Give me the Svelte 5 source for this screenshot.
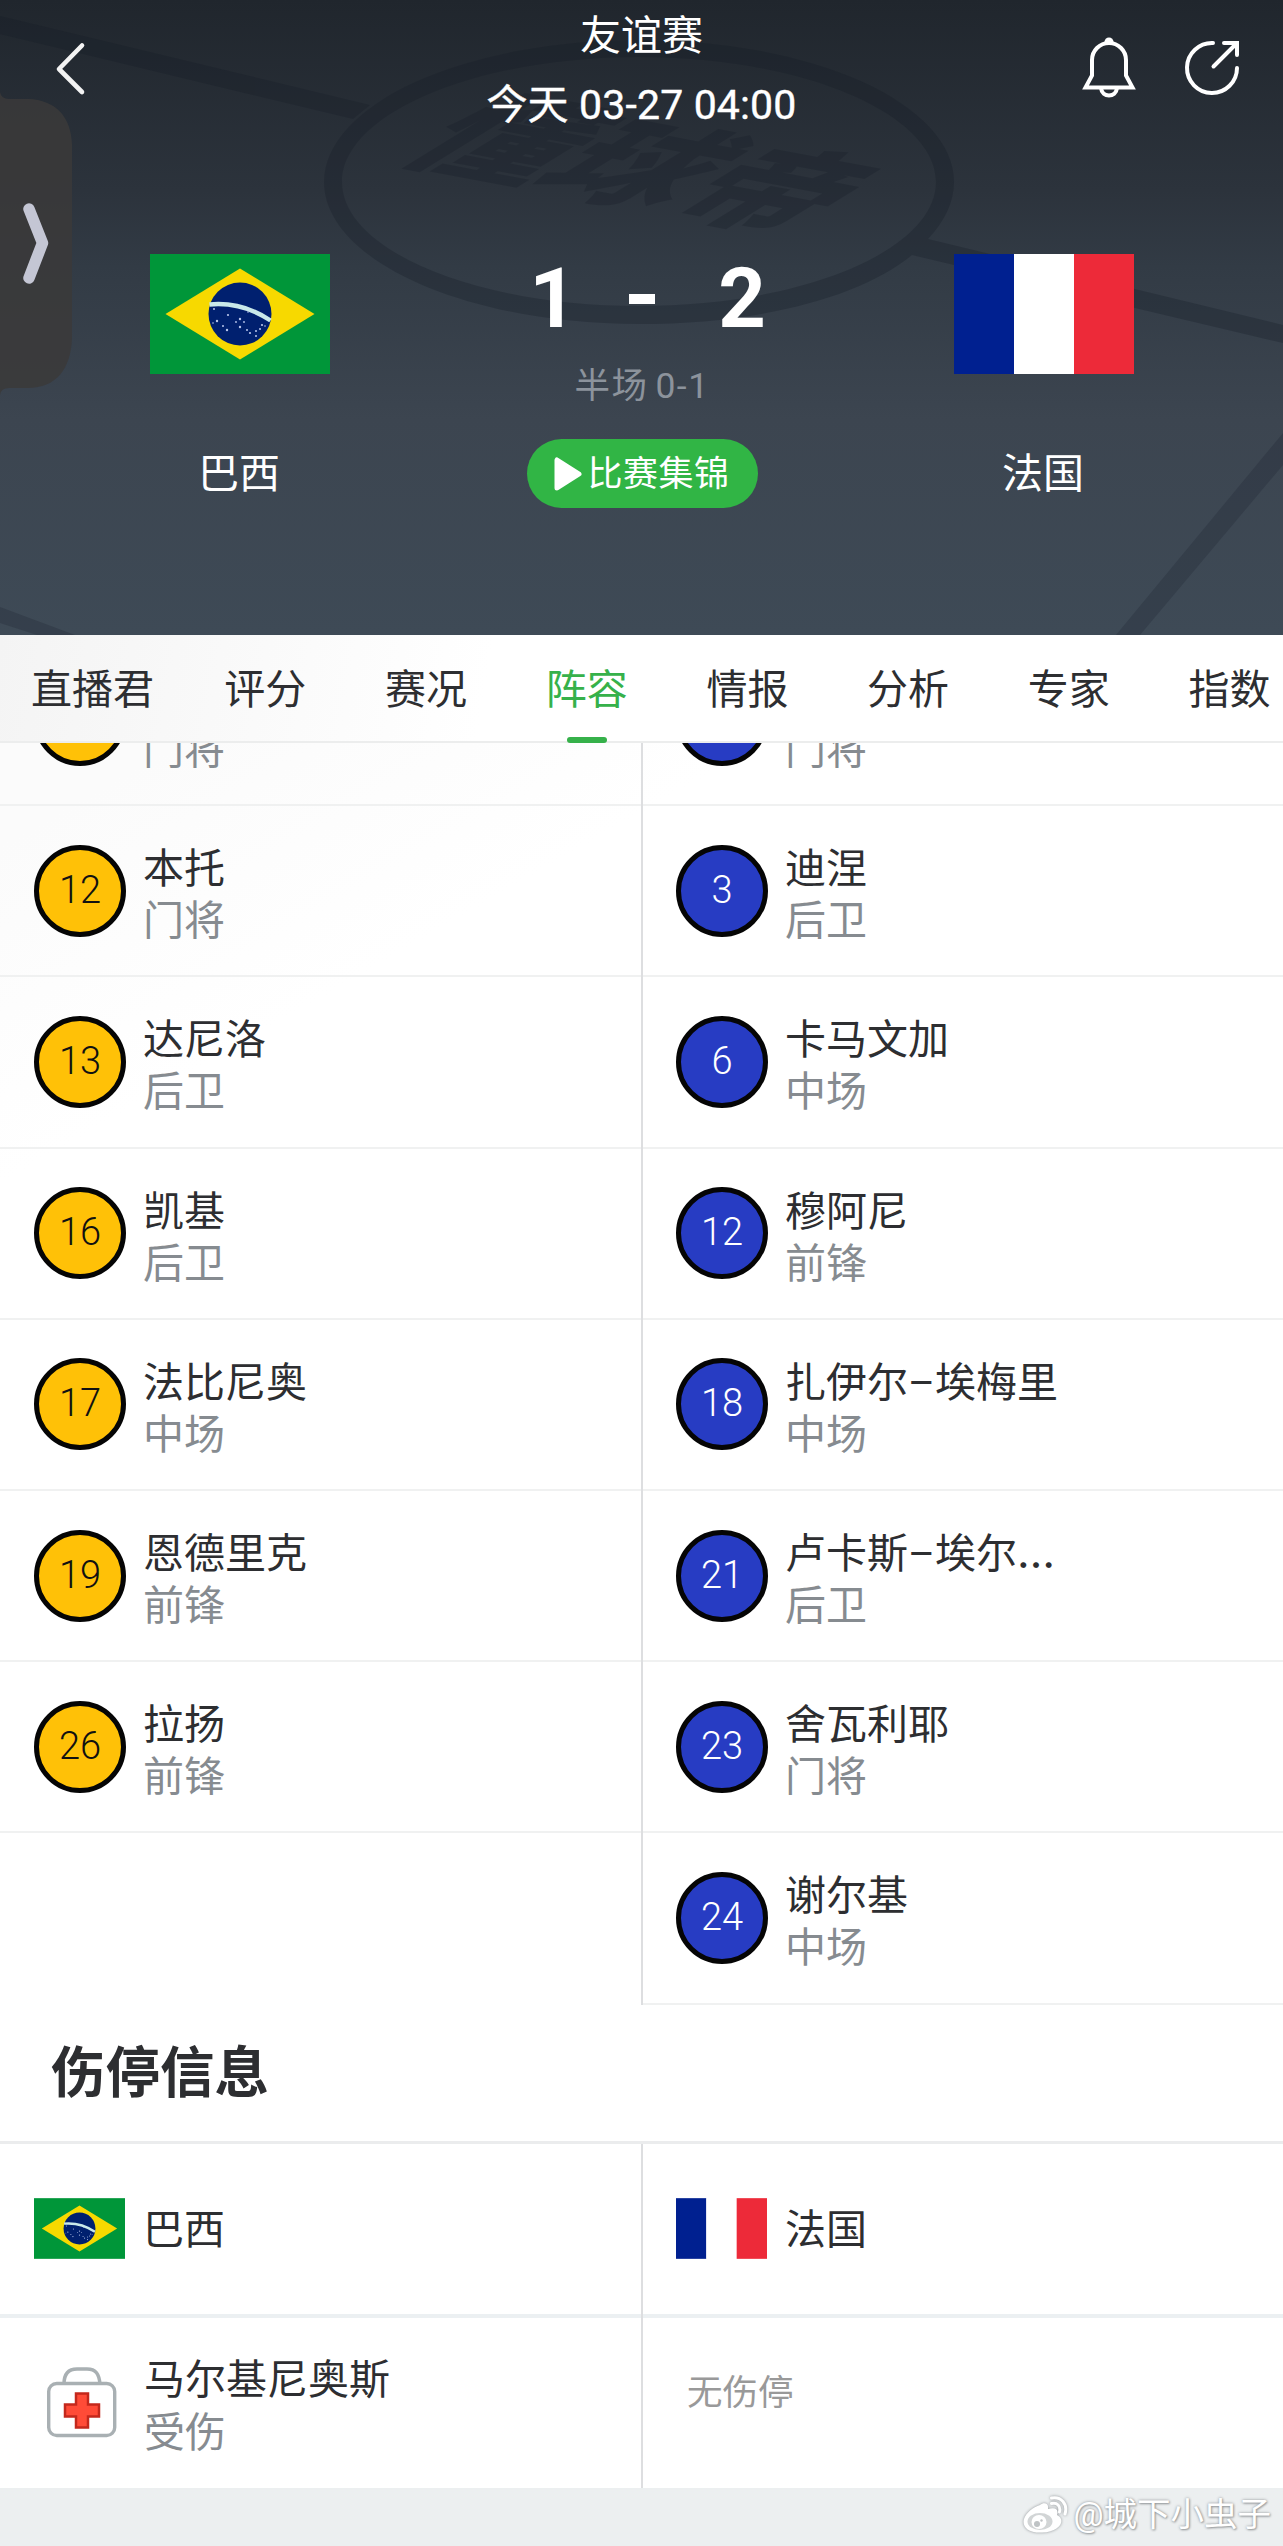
<script lang="ts">
	type Player = { num: string; name: string; role: string; cut?: boolean };

	const tabs = ['直播君', '评分', '赛况', '阵容', '情报', '分析', '专家', '指数'];
	let active = $state(3);

	// first row of each side is scrolled under the tab bar
	const home: Player[] = [
		{ num: '', name: '', role: '门将' },
		{ num: '12', name: '本托', role: '门将' },
		{ num: '13', name: '达尼洛', role: '后卫' },
		{ num: '16', name: '凯基', role: '后卫' },
		{ num: '17', name: '法比尼奥', role: '中场' },
		{ num: '19', name: '恩德里克', role: '前锋' },
		{ num: '26', name: '拉扬', role: '前锋' }
	];
	const away: Player[] = [
		{ num: '', name: '', role: '门将' },
		{ num: '3', name: '迪涅', role: '后卫' },
		{ num: '6', name: '卡马文加', role: '中场' },
		{ num: '12', name: '穆阿尼', role: '前锋' },
		{ num: '18', name: '扎伊尔–埃梅里', role: '中场' },
		{ num: '21', name: '卢卡斯–埃尔', role: '后卫', cut: true },
		{ num: '23', name: '舍瓦利耶', role: '门将' },
		{ num: '24', name: '谢尔基', role: '中场' }
	];
</script>

{#snippet brazil()}
	<svg class="flag" viewBox="0 0 180 120">
		<rect width="180" height="120" fill="#009639" />
		<path d="M15.500 60 90 14.500 164.500 60 90 105.500z" fill="#f7d900" />
		<circle cx="90" cy="60" r="31.500" fill="#00206f" />
		<path d="M59.500 50.500Q92 47.500 120.500 66.500" fill="none" stroke="#c9e9ea" stroke-width="4.500" />
		<g fill="#b9c6ec">
			<circle cx="64" cy="55" r="1" />
			<circle cx="78" cy="61" r="1.100" />
			<circle cx="67" cy="67" r="1.200" />
			<circle cx="73" cy="72" r="1" />
			<circle cx="77" cy="76" r="1.200" />
			<circle cx="63" cy="69" r=".8" />
			<circle cx="90" cy="65" r="1.200" />
			<circle cx="86" cy="68" r=".9" />
			<circle cx="94" cy="68" r=".9" />
			<circle cx="90" cy="73" r="1.200" />
			<circle cx="97" cy="76" r="1" />
			<circle cx="100" cy="79" r="1.100" />
			<circle cx="106" cy="77" r="1" />
			<circle cx="106" cy="82" r="1" />
			<circle cx="110" cy="75" r="1" />
			<circle cx="112" cy="71" r="1.100" />
			<circle cx="115" cy="72" r=".8" />
			<circle cx="98" cy="58" r=".8" />
		</g>
	</svg>
{/snippet}

{#snippet france()}
	<svg class="flag" viewBox="0 0 180 120">
		<rect width="60" height="120" fill="#002090" />
		<rect x="60" width="60" height="120" fill="#fff" />
		<rect x="120" width="60" height="120" fill="#ed2a39" />
	</svg>
{/snippet}

{#snippet player(p: Player)}
	<div class="player">
		<span class="shirt">{p.num}</span>
		<div class="who">
			<span class="name">{p.name}{#if p.cut}<i class="dots">…</i>{/if}</span>
			<span class="role">{p.role}</span>
		</div>
	</div>
{/snippet}

<div class="page">
	<header>
		<svg class="pitch" viewBox="0 0 1283 635">
			<g fill="#161c27" opacity=".29">
				<path
					d="M324 182a315 142 0 0 1 630 0q0 29-26 57L1283 325V343L912 255C860 298 757 324 639 324 465 324 324 260 324 182zM342 182C342 250 475 306 639 306S936 250 936 182 803 57 639 57 342 114 342 182z"
					fill-rule="evenodd"
				/>
				<path d="M0 16 370 105 353 119 0 34z" />
			</g>
			<g fill="#161c27" opacity=".22">
				<path d="M1283 433 1116 635H1140L1283 465z" />
				<path d="M0 607 75 635H37L0 623z" />
			</g>
			<text class="brand" transform="matrix(1.34 .25 -1.3 .8 508 87)" y="88">懂球帝</text>
		</svg>

		<div class="bar">
			<svg class="back" width="32" height="56" viewBox="0 0 32 56">
				<path d="M27 4.500 4 28 27 51" fill="none" stroke="#f3f3f3" stroke-width="4.600" stroke-linecap="round" stroke-linejoin="round" />
			</svg>
			<div class="meta">
				<span>友谊赛</span>
				<span class="date">今天 03-27 04:00</span>
			</div>
			<div class="actions">
				<svg width="54" height="62" viewBox="0 0 54 62" fill="none" stroke="#fff" stroke-width="4">
					<path d="M3.500 50.500 10 38.500V23a17 17 0 0 1 34 0V38.500L50.500 50.500z" />
					<path d="M19 51c1 10 15 10 16 0" />
					<path d="M22.500 5a4.500 4.500 0 0 1 9 0z" fill="#fff" stroke="none" />
				</svg>
				<svg width="56" height="56" viewBox="0 0 56 56" fill="none" stroke="#fff" stroke-width="4" stroke-linecap="round">
					<path d="M29 3A25 25 0 1 0 53 28" />
					<path d="M29.500 26.500 52 4M40 3H53V15" />
				</svg>
			</div>
		</div>

		<div class="match">
			<div class="team">
				{@render brazil()}
				<span>巴西</span>
			</div>
			<div class="result">
				<div class="score"><b>1</b><i></i><b>2</b></div>
				<span class="half">半场<em>0-1</em></span>
				<button>
					<svg width="28" height="34" viewBox="0 0 28 34">
						<path d="M3 3V31L25 17z" fill="#fff" stroke="#fff" stroke-width="5" stroke-linejoin="round" />
					</svg>
					<span>比赛集锦</span>
				</button>
			</div>
			<div class="team">
				{@render france()}
				<span>法国</span>
			</div>
		</div>

		<svg class="drawer" width="73" height="304" viewBox="0 0 73 304">
			<path d="M0 0Q1 7 9 7H28C56 8 71 25 72 52V246C71 277 56 296 28 296H9Q1 296 0 303z" fill="#3b3a3a" opacity=".85" />
			<path d="M29 117 42.500 151 29 186" fill="none" stroke="#c4c6d4" stroke-width="11.500" stroke-linecap="round" stroke-linejoin="round" />
		</svg>
	</header>

	<nav>
		{#each tabs as tab, i (tab)}
			<button class:active={active === i} onclick={() => (active = i)}>{tab}</button>
		{/each}
	</nav>

	<section class="lineup">
		<div class="col home">
			{#each home as p (p.num)}
				{@render player(p)}
			{/each}
		</div>
		<div class="col away">
			{#each away as p (p.num)}
				{@render player(p)}
			{/each}
		</div>
	</section>

	<h2>伤停信息</h2>

	<section class="injuries">
		<div class="col">
			<div class="head">{@render brazil()}<span>巴西</span></div>
			<div class="injured">
				<svg class="kit" width="70" height="72" viewBox="0 0 70 72">
					<path d="M17 17C17 6 22 2 30 2H40C49 2 52 7 53 17" fill="none" stroke="#a9b0b3" stroke-width="3.500" />
					<rect x="1.700" y="16.500" width="66" height="52" rx="8" fill="#fff" stroke="#a9b0b3" stroke-width="3.400" />
					<path d="M29 26.500H41V37.500H52V49.500H41V60.500H29V49.500H18V37.500H29z" fill="#ff4b37" stroke="#c3281c" stroke-width="2.500" />
				</svg>
				<div class="who">
					<span class="name">马尔基尼奥斯</span>
					<span class="role">受伤</span>
				</div>
			</div>
		</div>
		<div class="col away">
			<div class="head">{@render france()}<span>法国</span></div>
			<div class="none">无伤停</div>
		</div>
	</section>

	<footer>
		<svg width="46" height="38" viewBox="0 0 46 38">
			<path d="M18 9C22 6 27 7 26 13 33 11 37 13 35 19 44 23 39 36 20 36.500 5 37 0 30 2 23 4 17 11 11 18 9z" fill="#fff" />
			<ellipse cx="18" cy="25.500" rx="12.500" ry="8.500" fill="#d2d5d6" />
			<ellipse cx="17" cy="26" rx="7.500" ry="7" fill="#fff" />
			<circle cx="15" cy="28" r="3" fill="#bfc3c5" />
			<circle cx="19.500" cy="24.500" r="1.200" fill="#bfc3c5" />
			<path d="M29.500 7.500C35 6 39 10 37.500 16M29.500 2C39 0 46 8 43 18" fill="none" stroke="#fff" stroke-width="3" stroke-linecap="round" />
		</svg>
		<span>@城下小虫子</span>
	</footer>
</div>

<style>
	:global(body) {
		margin: 0;
		background: #eceff0;
	}
	.page {
		width: 1283px;
		height: 2546px;
		overflow: hidden;
		background: #fff;
		color: #2d2e31;
		font-family: Roboto, 'Noto Sans CJK SC', sans-serif;
		font-size: 41px;
		display: flex;
		flex-direction: column;
	}
	button {
		border: 0;
		padding: 0;
		background: none;
		font: inherit;
		color: inherit;
		cursor: pointer;
	}
	svg {
		display: block;
		flex: none;
	}

	header {
		position: relative;
		height: 635px;
		flex: none;
		color: #fff;
		background: linear-gradient(#20262d, #2c333c 30%, #323b45 42%, #3c4550 66%, #3e4a56);
	}
	.pitch {
		position: absolute;
		inset: 0;
	}
	.brand {
		font-family: 'Noto Sans CJK SC', sans-serif;
		font-size: 100px;
		font-weight: 900;
		fill: #161c27;
		opacity: 0.29;
	}
	.bar {
		position: relative;
		height: 140px;
		display: grid;
		grid-template-columns: 1fr auto 1fr;
		padding: 0 43px 0 55px;
	}
	.back {
		margin-top: 41px;
	}
	.meta {
		display: flex;
		flex-direction: column;
		align-items: center;
		line-height: 68px;
		padding: 2px 0 0 12px;
		margin-left: -24px;
	}
	.meta span {
		height: 69px;
	}
	.date {
		letter-spacing: 0.150px;
		-webkit-text-stroke: 0.400px #fff;
	}
	.actions {
		display: flex;
		justify-content: flex-end;
		gap: 48px;
		padding-top: 37px;
	}
	.actions svg:last-child {
		margin-top: 3px;
	}
	.match {
		position: relative;
		display: grid;
		grid-template-columns: 180px 1fr 180px;
		padding: 114px 149px 0 150px;
	}
	.team {
		display: flex;
		flex-direction: column;
		align-items: center;
		gap: 70px;
		line-height: 60px;
	}
	.team .flag {
		width: 180px;
		height: 120px;
	}
	.team span {
		padding-right: 2px;
	}
	.result {
		display: flex;
		flex-direction: column;
		align-items: center;
	}
	.score {
		display: grid;
		grid-template-columns: 50px 26px 50px;
		gap: 62px;
		align-items: center;
		padding-top: 2px;
		font-size: 83px;
		line-height: 86px;
	}
	.score b {
		text-align: center;
	}
	.score b:first-child {
		margin: 0 -11px 0 11px;
	}
	.score i {
		height: 10px;
		background: #fff;
	}
	.half {
		margin-top: 19px;
		font-size: 35.500px;
		line-height: 50px;
		letter-spacing: 1.500px;
		color: #8c939c;
	}
	.half em {
		font-style: normal;
		margin-left: 7px;
	}
	.result button {
		display: flex;
		align-items: center;
		gap: 6px;
		width: 231px;
		height: 69px;
		margin-top: 28px;
		padding-left: 27px;
		box-sizing: border-box;
		border-radius: 35px;
		background: #31b545;
		font-size: 35px;
		line-height: 50px;
		letter-spacing: 0.500px;
		white-space: nowrap;
	}
	.result button span {
		padding-top: 2px;
	}
	.drawer {
		position: absolute;
		left: 0;
		top: 92px;
	}

	nav {
		position: relative;
		z-index: 1;
		flex: none;
		display: flex;
		height: 108px;
		box-sizing: border-box;
		border-bottom: 2px solid #eceded;
		background: linear-gradient(100deg, #f4f4f4, #fff 38%);
	}
	nav button {
		position: relative;
		flex: 0 0 160.700px;
		height: 108px;
		line-height: 110px;
	}
	nav button:first-child {
		flex-basis: 185px;
	}
	nav button.active {
		color: #36b14a;
	}
	nav button.active::after {
		content: '';
		position: absolute;
		left: 50%;
		bottom: 0;
		width: 40px;
		height: 6px;
		margin-left: -20px;
		border-radius: 3px;
		background: #36b14a;
	}

	.lineup {
		display: flex;
		flex: none;
		margin-top: -108px;
		background: linear-gradient(150deg, #fbfbfb 10%, #fff 26%);
	}
	.col {
		width: 641px;
	}
	.away {
		border-left: 2px solid #dddee0;
	}
	.col.away {
		width: 640px;
	}
	.player {
		display: flex;
		align-items: center;
		gap: 17px;
		height: 171.200px;
		padding-left: 34px;
		box-sizing: border-box;
		border-bottom: 2px solid #f0f1f1;
	}
	.away .player,
	.away .head {
		padding-left: 33px;
	}
	.shirt {
		width: 92px;
		height: 92px;
		box-sizing: border-box;
		border: 5px solid #050505;
		border-radius: 50%;
		background: #ffc107;
		color: #111;
		font-size: 38px;
		font-weight: 300;
		line-height: 80px;
		text-align: center;
	}
	.away .shirt {
		background: #273cc3;
		color: #fff;
	}
	.who {
		display: flex;
		flex-direction: column;
		padding-top: 9px;
	}
	.who span {
		height: 52px;
		line-height: 52px;
	}
	.dots {
		font-family: Inter, sans-serif;
		font-style: normal;
		font-size: 44px;
		line-height: 1;
	}
	.role {
		color: #868b90;
	}

	h2 {
		flex: none;
		margin: 0;
		height: 136px;
		padding-left: 51px;
		font-size: 54.500px;
		line-height: 136px;
		border-bottom: 3px solid #ebeced;
	}
	.injuries {
		display: flex;
		flex: none;
	}
	.head {
		display: flex;
		align-items: center;
		gap: 18px;
		height: 170px;
		padding-left: 34px;
		border-bottom: 4px solid #ecf0f2;
	}
	.head span {
		padding-bottom: 6px;
	}
	.head .flag {
		width: 91px;
		height: 61px;
	}
	.injured {
		display: flex;
		align-items: center;
		height: 170px;
		gap: 27px;
		padding-left: 47px;
	}
	.injured .who span {
		height: 53px;
		line-height: 53px;
	}
	.none {
		height: 170px;
		padding-left: 44px;
		font-size: 35.500px;
		line-height: 151px;
		color: #999;
	}

	footer {
		flex: 1;
		display: flex;
		align-items: center;
		justify-content: flex-end;
		gap: 5px;
		padding: 0 12px 4px 0;
		background: #eceff0;
		color: #fff;
		font-size: 33.500px;
		line-height: 50px;
	}
	footer span {
		text-shadow: 0 0 3px #8d9194, 1px 1px 2px #a2a6a8;
	}
	footer svg {
		filter: drop-shadow(0 0 1.500px #8d9194);
	}
</style>
